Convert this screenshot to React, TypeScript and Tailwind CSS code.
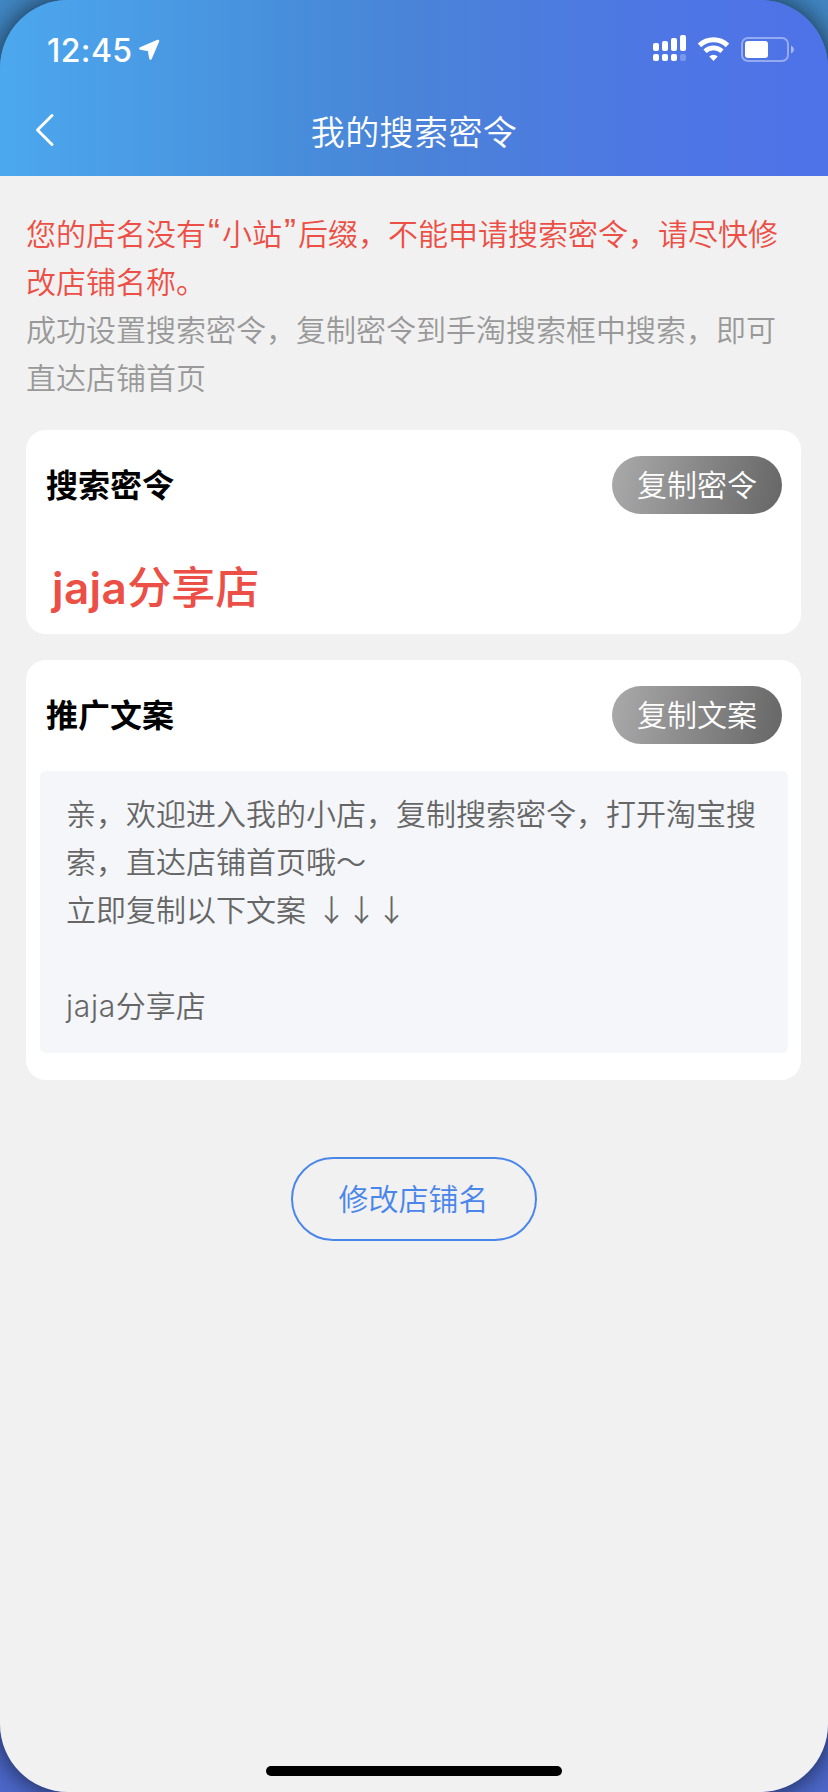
import React from "react";

function StatusBar() {
  return (
    <div className="flex h-[84px] items-start justify-between pl-[47px] pr-[33px] pt-[30px]">
      <div className="flex items-start">
        <span className="w-[86px] whitespace-nowrap text-[32px] font-[550] leading-[41px] tracking-[0.4px]">12:45</span>
        <svg className="ml-[5px] mt-[9px]" width="23" height="23" viewBox="0 0 23 23" fill="white">
          <path
            d="M20 2 L2.5 9.5 L11 11 L12.5 19.5 Z"
            stroke="white"
            strokeWidth="2.6"
            strokeLinejoin="round"
          />
        </svg>
      </div>
      <svg className="mt-[4px]" width="142" height="30" viewBox="652 34 142 30" fill="white">
        {/* dual sim signal */}
        <rect x="652" y="43" width="6" height="8" rx="2" />
        <rect x="661" y="41" width="6" height="10" rx="2" />
        <rect x="670" y="38" width="6" height="13" rx="2" />
        <rect x="679" y="35" width="6" height="16" rx="2" />
        <rect x="652" y="54" width="6" height="7" rx="2" />
        <rect x="661" y="54" width="6" height="7" rx="2" />
        <rect x="670" y="54" width="6" height="7" rx="2" />
        <rect x="679" y="54" width="6" height="7" rx="2" opacity="0.25" />
        {/* wifi */}
        <path d="M698.5 45.3 A20.5 20.5 0 0 1 726.5 45.3" fill="none" stroke="white" strokeWidth="5" />
        <path d="M704 51.2 A12.5 12.5 0 0 1 721 51.2" fill="none" stroke="white" strokeWidth="4.6" />
        <path d="M708.3 56.4 A6 6 0 0 1 716.7 56.4 L712.5 61 Z" />
        {/* battery */}
        <rect x="741" y="38" width="46" height="23" rx="6" fill="none" stroke="white" strokeWidth="2" opacity="0.4" />
        <path d="M790 45.5 Q793 47 793 49.5 Q793 52 790 53.5 Z" opacity="0.5" />
        <rect x="744" y="41" width="23" height="17" rx="3" />
      </svg>
    </div>
  );
}

function CopyButton({ label }: { label: string }) {
  return (
    <button className="flex h-[58px] w-[170px] items-center justify-center rounded-full bg-[linear-gradient(100deg,#aaaaaa,#666666)] text-[30px] font-[350] text-white">
      {label}
    </button>
  );
}

function Quote({ children }: { children: string }) {
  return (
    <span className="inline-block h-[30px] w-[16px] text-center font-['Liberation_Sans',sans-serif] text-[36px] leading-[30px]">
      {children}
    </span>
  );
}

export default function App() {
  return (
    <div className="h-[1792px] w-[828px] overflow-hidden bg-linear-to-b from-[#4187c4] to-[#4c68cb] font-['Inter','Noto_Sans_CJK_SC',sans-serif]">
      <div className="flex h-full flex-col overflow-hidden rounded-[68px] shadow-[0_0_28px_rgba(0,0,0,0.7)]">
        <header className="h-[176px] shrink-0 bg-[linear-gradient(90deg,#4ca8ee_0%,#478edb_35%,#4a83d8_50%,#4e76e4_80%,#4e72e8_100%)] text-white">
          <StatusBar />
          <div className="flex h-[92px] items-center px-[35px]">
            <svg width="20" height="34" viewBox="0 0 20 34" fill="none" stroke="white" strokeWidth="3" strokeLinecap="round" strokeLinejoin="round">
              <path d="M17 2.5 L2.5 17 L17 31.5" />
            </svg>
            <h1 className="flex-1 pr-[20px] pt-[4px] text-center text-[34px] font-[350] tracking-[0.4px]">我的搜索密令</h1>
          </div>
        </header>

        <main className="flex flex-1 flex-col bg-[#f1f1f1] pl-[26px] pr-[27px] pt-[34px]">
          <div className="whitespace-nowrap text-[30px] font-[350] leading-[48px]">
            <p className="h-[48px] text-[#eb4f46]">
              您的店名没有<Quote>“</Quote>小站<Quote>”</Quote>后缀，不能申请搜索密令，请尽快修
            </p>
            <p className="h-[48px] text-[#eb4f46]">改店铺名称。</p>
            <p className="text-[#999999]">
              成功设置搜索密令，复制密令到手淘搜索框中搜索，即可
              <br />
              直达店铺首页
            </p>
          </div>

          <section className="mt-[28px] h-[204px] rounded-[20px] bg-white pl-[20px] pr-[19px] pt-[26px]">
            <div className="flex items-center justify-between">
              <h2 className="pt-[1px] text-[32px] font-bold text-black">搜索密令</h2>
              <CopyButton label="复制密令" />
            </div>
            <p className="mt-[44px] pl-[6px] text-[44px] font-medium leading-[60px] text-[#eb4f46]">
              <span className="font-semibold tracking-[0.4px]">jaja</span>分享店
            </p>
          </section>

          <section className="mt-[26px] h-[420px] rounded-[20px] bg-white pl-[14px] pr-[13px] pt-[26px]">
            <div className="flex items-center justify-between pl-[6px] pr-[6px]">
              <h2 className="pt-[2px] text-[32px] font-bold text-black">推广文案</h2>
              <CopyButton label="复制文案" />
            </div>
            <div className="mt-[27px] h-[282px] whitespace-nowrap rounded-[6px] bg-[#f4f6fa] pl-[26px] pt-[19px] text-[30px] font-[350] leading-[48px] text-[#666666]">
              <p>亲，欢迎进入我的小店，复制搜索密令，打开淘宝搜</p>
              <p>索，直达店铺首页哦～</p>
              <p className="h-[48px]">
                立即复制以下文案 <span className="ml-[2px] font-['Noto_Sans_CJK_SC',sans-serif] leading-[30px]">↓↓↓</span>
              </p>
              <br />
              <p>
                <span className="tracking-[0.7px]">jaja</span>分享店
              </p>
            </div>
          </section>

          <button className="mt-[77px] flex h-[84px] w-[246px] items-center justify-center self-center rounded-full border-2 border-[#4a86ea] text-[30px] font-[350] text-[#4a86ea]">
            修改店铺名
          </button>

          <div className="mb-[16px] mt-auto h-[10px] w-[296px] self-center rounded-full bg-black" />
        </main>
      </div>
    </div>
  );
}
